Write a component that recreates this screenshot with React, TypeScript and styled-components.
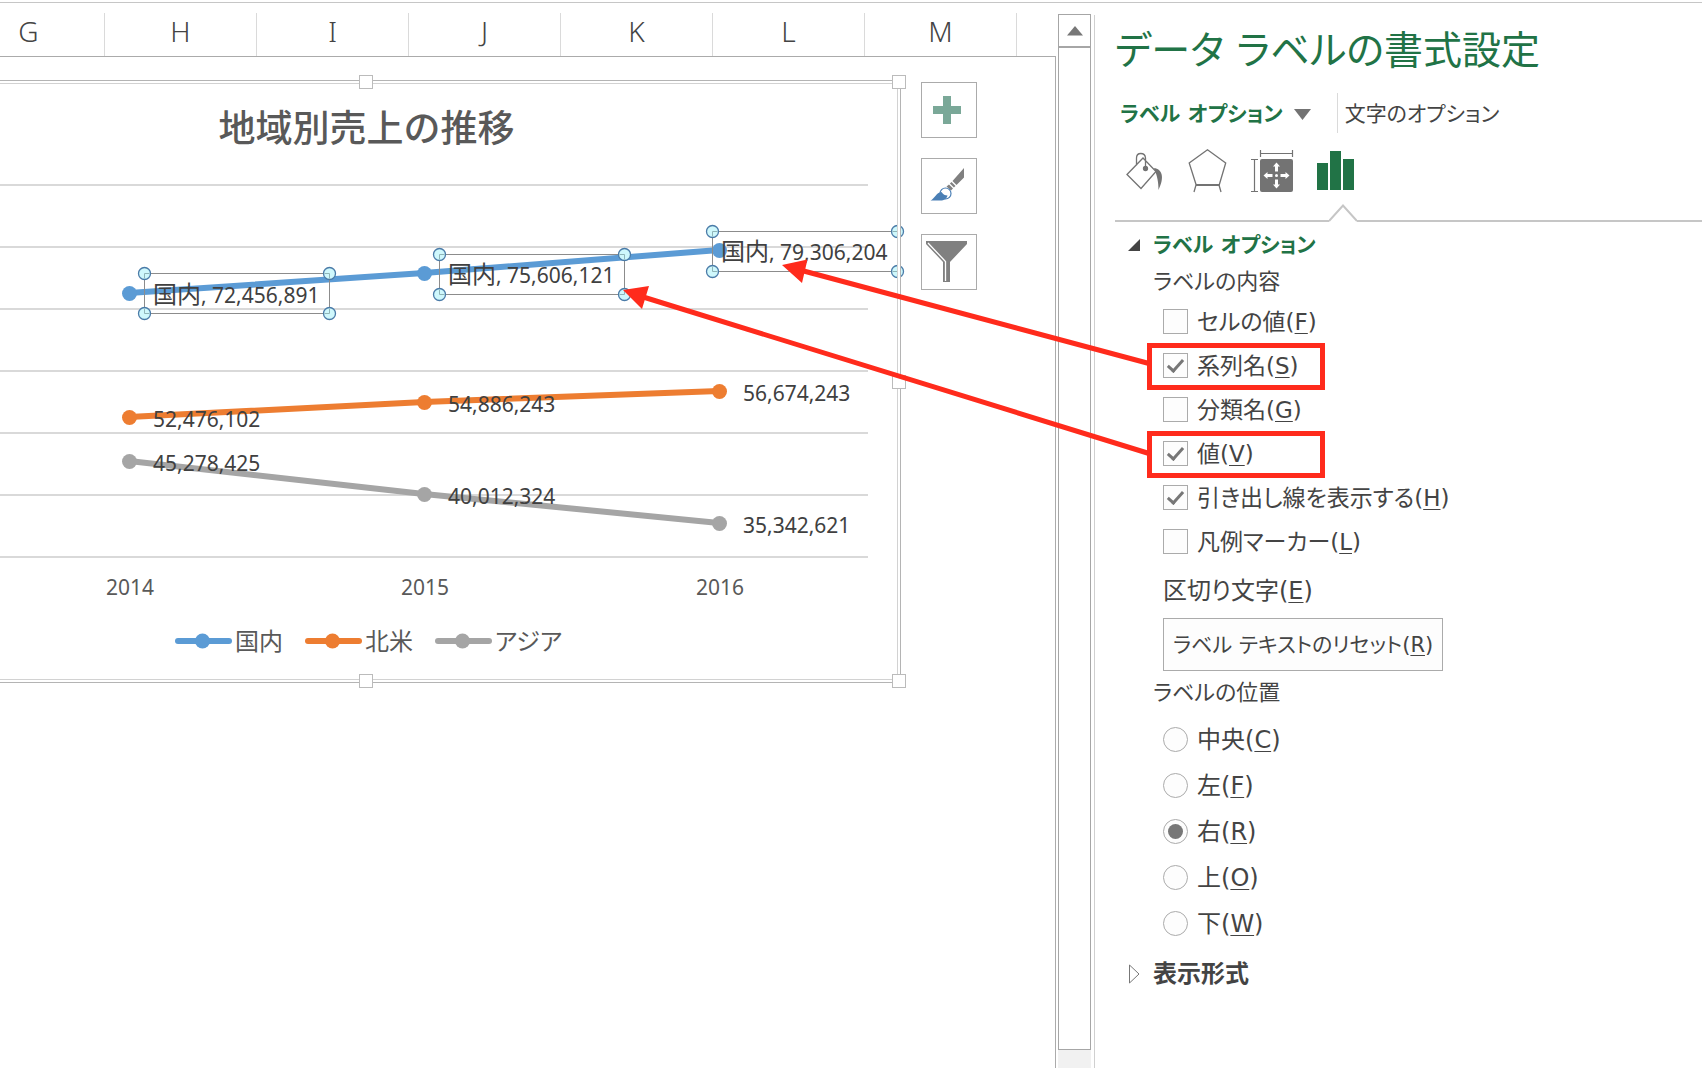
import React from "react";
import styled, { createGlobalStyle } from "styled-components";

const uiFont = '"DejaVu Sans", "Noto Sans CJK JP", sans-serif';
const chartFont = '"Noto Sans", "Noto Sans CJK JP", sans-serif';
const green = "#217346";
const red = "#ff2b1c";

const GlobalStyle = createGlobalStyle`
  *, *::before, *::after { box-sizing: border-box; }
  body { margin: 0; background: #fff; color: #444; font-family: ${uiFont}; }
  h1, h2, h3, ul, fieldset { margin: 0; padding: 0; border: 0; font-weight: 400; }
  button { font: inherit; color: inherit; background: none; border: 0; padding: 0; }
`;

const Page = styled.main`
  min-height: 100vh;
  padding-top: 2px;
  display: flex;
  flex-direction: column;
  overflow: hidden;
`;

const Workspace = styled.div`
  flex: 1;
  display: grid;
  grid-template-columns: minmax(0, 1fr) 38px 608px;
  border-top: 1px solid #c6c6c6;
`;

/* ---------- worksheet ---------- */

const Sheet = styled.section`
  display: flex;
  flex-direction: column;
  overflow: hidden;
`;

const ColumnHeaders = styled.div`
  display: flex;
  justify-content: flex-end;
  padding: 10px 39px 0 0;
  border-bottom: 1px solid #ababab;
`;

const ColumnHeader = styled.div`
  flex: 0 0 152px;
  height: 43px;
  padding-bottom: 7px;
  display: flex;
  align-items: center;
  justify-content: center;
  border-right: 1px solid #dadada;
  font: 300 28px ${chartFont};
`;

const SheetBody = styled.div`
  flex: 1;
  display: flex;
  justify-content: flex-end;
  align-items: flex-start;
  gap: 20px;
  padding: 23px 78px 0 0;
  border-right: 1px solid #ababab;
`;

const ChartFrame = styled.section`
  position: relative;
  flex: 0 0 1069px;
  padding: 20px 0 26px;
  font-family: ${chartFont};
  color: #595959;

  &::after {
    content: "";
    position: absolute;
    inset: 0;
    border: 1px solid #b4b4b4;
    box-shadow: inset 0 0 0 2px #fff, inset 0 0 0 3px #d2d2d2;
    pointer-events: none;
  }
`;

const ChartTitle = styled.h2`
  font-size: 37px;
  font-weight: 500;
  line-height: 56px;
  text-align: center;
`;

const Plot = styled.svg`
  display: block;
  margin-top: 4px;
  overflow: visible;
`;

const Legend = styled.ul`
  display: flex;
  justify-content: center;
  gap: 22px;
  margin-top: 17px;
  padding-left: 4px;
  list-style: none;
  font-size: 24px;
  line-height: 32px;
  font-feature-settings: "palt";
`;

const LegendItem = styled.li`
  display: flex;
  align-items: center;
  gap: 3px;
`;

const Grip = styled.span<{ $x: "mid" | "end"; $y: "top" | "mid" | "bottom" }>`
  position: absolute;
  z-index: 1;
  width: 14px;
  height: 14px;
  background: #fff;
  border: 1px solid #bbb;
  left: ${(p) => (p.$x === "mid" ? "calc(50% - 8px)" : "calc(100% - 9px)")};
  top: ${(p) => (p.$y === "top" ? "-5px" : p.$y === "mid" ? "calc(50% - 7px)" : "calc(100% - 9px)")};
`;

const ChartTools = styled.div`
  display: flex;
  flex-direction: column;
  gap: 20px;
  margin-top: 2px;
`;

const ChartTool = styled.button`
  width: 56px;
  height: 56px;
  border: 1px solid #ababab;
  background: #fff;

  svg { display: block; }
`;

/* ---------- scroll bar ---------- */

const ScrollBar = styled.div`
  display: flex;
  flex-direction: column;
  margin: 11px 3px 0 2px;
  padding-bottom: 18px;
  background: #f1f1f1;
`;

const ScrollUp = styled.button`
  height: 33px;
  display: grid;
  place-items: center;
  background: #fff;
  border: 1px solid #a6a6a6;
`;

const ScrollThumb = styled.div`
  flex: 1;
  background: #fff;
  border: 1px solid #a6a6a6;
`;

/* ---------- format pane ---------- */

const Pane = styled.aside`
  position: relative;
  margin-top: 12px;
  padding: 8px 0 0 20px;
  border-left: 1px solid #d0d0d0;
  font-size: 24px;
  line-height: 32px;
  font-feature-settings: "palt";
  white-space: nowrap;
`;

const PaneTitle = styled.h1`
  font-size: 39px;
  line-height: 56px;
  color: ${green};
`;

const Tabs = styled.div`
  display: flex;
  align-items: center;
  height: 40px;
  margin-top: 14px;
  padding-left: 5px;
`;

const Tab = styled.button<{ $active?: boolean }>`
  display: flex;
  align-items: center;
  gap: 11px;
  height: 40px;
  padding-top: 2px;
  font-size: 21px;
  font-weight: ${(p) => (p.$active ? 700 : 400)};
  color: ${(p) => (p.$active ? green : "#444")};

  & + & {
    margin-left: 26px;
    padding-left: 7px;
    border-left: 1px solid #dadada;
  }
`;

const IconTabs = styled.div`
  display: flex;
  gap: 18px;
  margin-top: 16px;
  padding-left: 8px;

  svg { display: block; }
`;

const IconTab = styled.button`
  width: 46px;
  height: 44px;
`;

const Rule = styled.div`
  display: flex;
  align-items: flex-end;
  margin-top: 11px;

  &::before, &::after {
    content: "";
    flex: 0 0 214px;
    height: 2px;
    background: #c6c6c6;
  }
  &::after { flex: 1; }
  svg { display: block; }
`;

const SectionHead = styled.button<{ $open?: boolean }>`
  display: grid;
  grid-template-columns: 38px auto;
  align-items: center;
  justify-items: start;
  height: 32px;
  margin-top: ${(p) => (p.$open ? 7 : 12)}px;
  font-weight: 700;
  font-size: ${(p) => (p.$open ? 21 : 24)}px;
  color: ${(p) => (p.$open ? green : "#444")};

  svg { margin-left: 13px; }
`;

const Group = styled.fieldset`
  min-width: 0;
  padding-left: 38px;
  margin-top: 5px;
`;

const GroupLabel = styled.div`
  font-size: 22px;
`;

const Options = styled.div<{ $top: number; $size: number }>`
  display: grid;
  justify-items: start;
  gap: 1px;
  margin-top: ${(p) => p.$top}px;
  padding-left: 10px;
  font-size: ${(p) => p.$size}px;
`;

const Option = styled.label<{ $height: number; $marked?: boolean }>`
  position: relative;
  display: flex;
  align-items: center;
  gap: 9px;
  height: ${(p) => p.$height}px;

  ${(p) =>
    p.$marked &&
    `&::before {
      content: "";
      position: absolute;
      left: -16px;
      top: -1px;
      width: 178px;
      height: 47px;
      border: 5px solid ${red};
    }`}
`;

const Tick = styled.input`
  appearance: none;
  display: grid;
  place-items: center;
  width: 25px;
  height: 25px;
  margin: 0;
  border: 1px solid #ababab;
  background: #fdfdfd;

  &[type="radio"] { border-radius: 50%; }
  &[type="radio"]:checked::before {
    content: "";
    width: 15px;
    height: 15px;
    border-radius: 50%;
    background: #777;
  }
  &[type="checkbox"]:checked::before {
    content: "";
    width: 9px;
    height: 16px;
    margin-bottom: 4px;
    border: solid #777;
    border-width: 0 3px 3px 0;
    transform: rotate(42deg);
  }
`;

const Key = styled.u`
  text-decoration-thickness: 1px;
  text-underline-offset: 3px;
`;

const Separator = styled.div`
  margin: 12px 0 11px 10px;
`;

const ResetButton = styled.button`
  display: block;
  height: 53px;
  margin: 0 0 6px 10px;
  padding: 0 9px;
  border: 1px solid #ababab;
  background: #fdfdfd;
  font-size: 21px;
`;

const Arrows = styled.svg`
  position: absolute;
  z-index: 2;
  left: -475px;
  top: 225px;
  pointer-events: none;
`;

/* ---------- data ---------- */

const columns = ["G", "H", "I", "J", "K", "L", "M"];
const gridLines = [185, 247, 309, 371, 433, 495, 557];
const xs = [129, 424, 719];
const years = ["2014", "2015", "2016"];

const series = [
  { name: "国内", color: "#5b9bd5", ys: [293, 273, 250], labels: ["72,456,891", "75,606,121", "79,306,204"], selected: true },
  { name: "北米", color: "#ed7d31", ys: [417, 402, 391], labels: ["52,476,102", "54,886,243", "56,674,243"], selected: false },
  { name: "アジア", color: "#a5a5a5", ys: [461, 494, 523], labels: ["45,278,425", "40,012,324", "35,342,621"], selected: false },
];

const selections = [
  { x: 144, y: 274 },
  { x: 439, y: 255 },
  { x: 712, y: 232 },
];

const contents = [
  { text: "セルの値", key: "F", on: false, marked: false },
  { text: "系列名", key: "S", on: true, marked: true },
  { text: "分類名", key: "G", on: false, marked: false },
  { text: "値", key: "V", on: true, marked: true },
  { text: "引き出し線を表示する", key: "H", on: true, marked: false },
  { text: "凡例マーカー", key: "L", on: false, marked: false },
];

const positions = [
  { text: "中央", key: "C" },
  { text: "左", key: "F" },
  { text: "右", key: "R" },
  { text: "上", key: "O" },
  { text: "下", key: "W" },
];

const Caption = ({ text, k }: { text: string; k: string }) => (
  <span>
    {text}(<Key>{k}</Key>)
  </span>
);

function SelectionBox({ x, y }: { x: number; y: number }) {
  const w = 185;
  const h = 40;
  return (
    <g>
      <rect x={x + 0.5} y={y - 0.5} width={w} height={h} fill="none" stroke="#8c8c8c" />
      {[[x, y], [x + w, y], [x, y + h], [x + w, y + h]].map(([cx, cy]) => (
        <g key={`${cx}-${cy}`}>
          <circle cx={cx + 0.5} cy={cy - 0.5} r={6} fill="#cff8fc" stroke="#4a7ba8" strokeWidth={1.3} />
          <path
            d={`M${cx + 0.5} ${cy - 0.5}h${cx === x ? 5 : -5}M${cx + 0.5} ${cy - 0.5}v${cy === y ? 5 : -5}`}
            stroke="#8fb5b8"
          />
        </g>
      ))}
    </g>
  );
}

function Chart() {
  return (
    <ChartFrame>
      <ChartTitle>地域別売上の推移</ChartTitle>
      <Plot width="1069" height="448" viewBox="-168 160 1069 448" fontSize="21">
        {gridLines.map((y) => (
          <path key={y} d={`M-140 ${y}H868`} stroke="#d9d9d9" strokeWidth="2" />
        ))}
        {series.map((s) => (
          <g key={s.name} fill={s.color}>
            <polyline
              points={xs.map((x, i) => `${x},${s.ys[i]}`).join(" ")}
              fill="none"
              stroke={s.color}
              strokeWidth="6"
            />
            {xs.map((x, i) => (
              <circle key={x} cx={x + 0.5} cy={s.ys[i] + 0.5} r="7.5" />
            ))}
          </g>
        ))}
        {selections.map((s) => (
          <SelectionBox key={s.x} {...s} />
        ))}
        {series.map((s) => (
          <g key={s.name} fill="#404040">
            {xs.map((x, i) => (
              <text key={x} x={s.selected ? selections[i].x + 9 : x + 24} y={s.ys[i] + 10}>
                {s.selected && <tspan fontSize="24">{s.name}</tspan>}
                {s.selected && ", "}
                {s.labels[i]}
              </text>
            ))}
          </g>
        ))}
        {years.map((year, i) => (
          <text key={year} x={xs[i] + 1} y="595" textAnchor="middle" fill="#595959">
            {year}
          </text>
        ))}
      </Plot>
      <Legend>
        {series.map((s) => (
          <LegendItem key={s.name}>
            <svg width="57" height="16" fill={s.color}>
              <path d="M3 8H54" stroke={s.color} strokeWidth="6" strokeLinecap="round" />
              <circle cx="27.5" cy="8" r="7.5" />
            </svg>
            {s.name}
          </LegendItem>
        ))}
      </Legend>
      <Grip $x="mid" $y="top" />
      <Grip $x="end" $y="top" />
      <Grip $x="end" $y="mid" />
      <Grip $x="mid" $y="bottom" />
      <Grip $x="end" $y="bottom" />
    </ChartFrame>
  );
}

function Tools() {
  return (
    <ChartTools>
      <ChartTool aria-label="グラフ要素">
        <svg width="54" height="54">
          <path d="M21 13h8v10h10v8H29v10h-8V31H11v-8h10z" fill="#7aa898" />
        </svg>
      </ChartTool>
      <ChartTool aria-label="グラフ スタイル">
        <svg width="54" height="54">
          <path d="M42 9v9.500l-7.500 7.500-4-4zM29.500 23l4 4-1.600 1.600-4-4zM27 25.500l4 4-2 2-4.500-4z" fill="#808080" />
          <circle cx="23.500" cy="34.500" r="5.500" fill="#fff" stroke="#4a7fb5" strokeWidth="1.200" />
          <path d="M8.500 41.500c4-1.500 5.500-8 11-8.500 1.500 2.500 3.500 3.500 6 3.500-.5 3-3.500 5-7 5z" fill="#4a7fb5" />
        </svg>
      </ChartTool>
      <ChartTool aria-label="グラフ フィルター">
        <svg width="54" height="54">
          <path d="M4 6h41v3L28 27v20h-7V27L4 9z" fill="#808080" />
          <path d="M6 8l17.500 18.500V46" fill="none" stroke="#fff" strokeWidth="1.300" />
        </svg>
      </ChartTool>
    </ChartTools>
  );
}

function PaneIcons() {
  return (
    <IconTabs>
      <IconTab aria-label="塗りつぶしと線">
        <svg width="46" height="44" fill="none" stroke="#737373" strokeWidth="1.300">
          <path d="M4 25.500L20 9l13 13.500-15 17zM13.500 16.500V9c0-6 8.500-6 9 0v10" />
          <circle cx="22.500" cy="19.500" r="2" fill="#737373" />
          <path d="M31 19c8 1 11 9 4.500 22 0-8-1-13-4.500-22z" fill="#737373" stroke="none" />
        </svg>
      </IconTab>
      <IconTab aria-label="効果">
        <svg width="46" height="44" fill="none" stroke="#737373" strokeWidth="1.300">
          <path d="M20.500 .800L2.200 14l7 22h23l6.500-22zM9 36l-2 7M32 36l2 7" />
          <path d="M9 36h23.500" strokeWidth="2" />
        </svg>
      </IconTab>
      <IconTab aria-label="サイズとプロパティ">
        <svg width="46" height="44">
          <path d="M9.500 1v7M41.500 1v7M9.500 4.500h32M0 10.500h7M0 42.500h7M3.500 10.500v32" stroke="#737373" fill="none" strokeWidth="1.200" />
          <rect x="9" y="10" width="33" height="33" rx="2" fill="#737373" />
          <path
            d="M25.500 13.500l3.500 4h-2v5h-3v-5h-2zM25.500 39.500l3.500-4h-2v-5h-3v5h-2zM12.500 26.500l4-3.500v2h5v3h-5v2zM38.500 26.500l-4-3.500v2h-5v3h5v2z"
            fill="#fff"
          />
          <circle cx="25.500" cy="26.500" r="1.500" fill="#fff" />
        </svg>
      </IconTab>
      <IconTab aria-label="ラベル オプション">
        <svg width="46" height="44" fill={green}>
          <path d="M2 14h11v27H2zM15 2h11v39H15zM28 10h11v31H28z" />
        </svg>
      </IconTab>
    </IconTabs>
  );
}

export default function App() {
  return (
    <Page>
      <GlobalStyle />
      <Workspace>
        <Sheet>
          <ColumnHeaders>
            {columns.map((c) => (
              <ColumnHeader key={c}>{c}</ColumnHeader>
            ))}
          </ColumnHeaders>
          <SheetBody>
            <Chart />
            <Tools />
          </SheetBody>
        </Sheet>

        <ScrollBar>
          <ScrollUp aria-label="上へスクロール">
            <svg width="16" height="10">
              <path d="M0 9.500L8 0l8 9.500z" fill="#777" />
            </svg>
          </ScrollUp>
          <ScrollThumb />
        </ScrollBar>

        <Pane>
          <PaneTitle>データ ラベルの書式設定</PaneTitle>
          <Tabs>
            <Tab $active>
              ラベル オプション
              <svg width="17" height="11">
                <path d="M0 0h17L8.500 11z" fill="#737373" />
              </svg>
            </Tab>
            <Tab>文字のオプション</Tab>
          </Tabs>
          <PaneIcons />
          <Rule>
            <svg width="28" height="18" fill="none" stroke="#c6c6c6" strokeWidth="2">
              <path d="M0 17L14 1.500 28 17" />
            </svg>
          </Rule>

          <SectionHead $open>
            <svg width="12" height="12">
              <path d="M12 0v12H0z" fill="#444" />
            </svg>
            ラベル オプション
          </SectionHead>
          <Group>
            <GroupLabel>ラベルの内容</GroupLabel>
            <Options $top={2} $size={23}>
              {contents.map((o) => (
                <Option key={o.key} $height={43} $marked={o.marked}>
                  <Tick type="checkbox" defaultChecked={o.on} />
                  <Caption text={o.text} k={o.key} />
                </Option>
              ))}
            </Options>
            <Separator>
              <Caption text="区切り文字" k="E" />
            </Separator>
            <ResetButton>
              <Caption text="ラベル テキストのリセット" k="R" />
            </ResetButton>
            <GroupLabel>ラベルの位置</GroupLabel>
            <Options $top={8} $size={24}>
              {positions.map((o) => (
                <Option key={o.key} $height={45}>
                  <Tick type="radio" name="position" defaultChecked={o.key === "R"} />
                  <Caption text={o.text} k={o.key} />
                </Option>
              ))}
            </Options>
          </Group>
          <SectionHead>
            <svg width="12" height="20">
              <path d="M1.500 1v18L11 10z" fill="none" stroke="#777" />
            </svg>
            表示形式
          </SectionHead>

          <Arrows width="530" height="230" viewBox="620 240 530 230" fill={red}>
            <path d="M1149 363.500L800 270M1149 453.500L640 296" stroke={red} strokeWidth="5" />
            <path d="M782 265l25.500-5.500L802 283zM623 290l26-4-7 23z" />
          </Arrows>
        </Pane>
      </Workspace>
    </Page>
  );
}
